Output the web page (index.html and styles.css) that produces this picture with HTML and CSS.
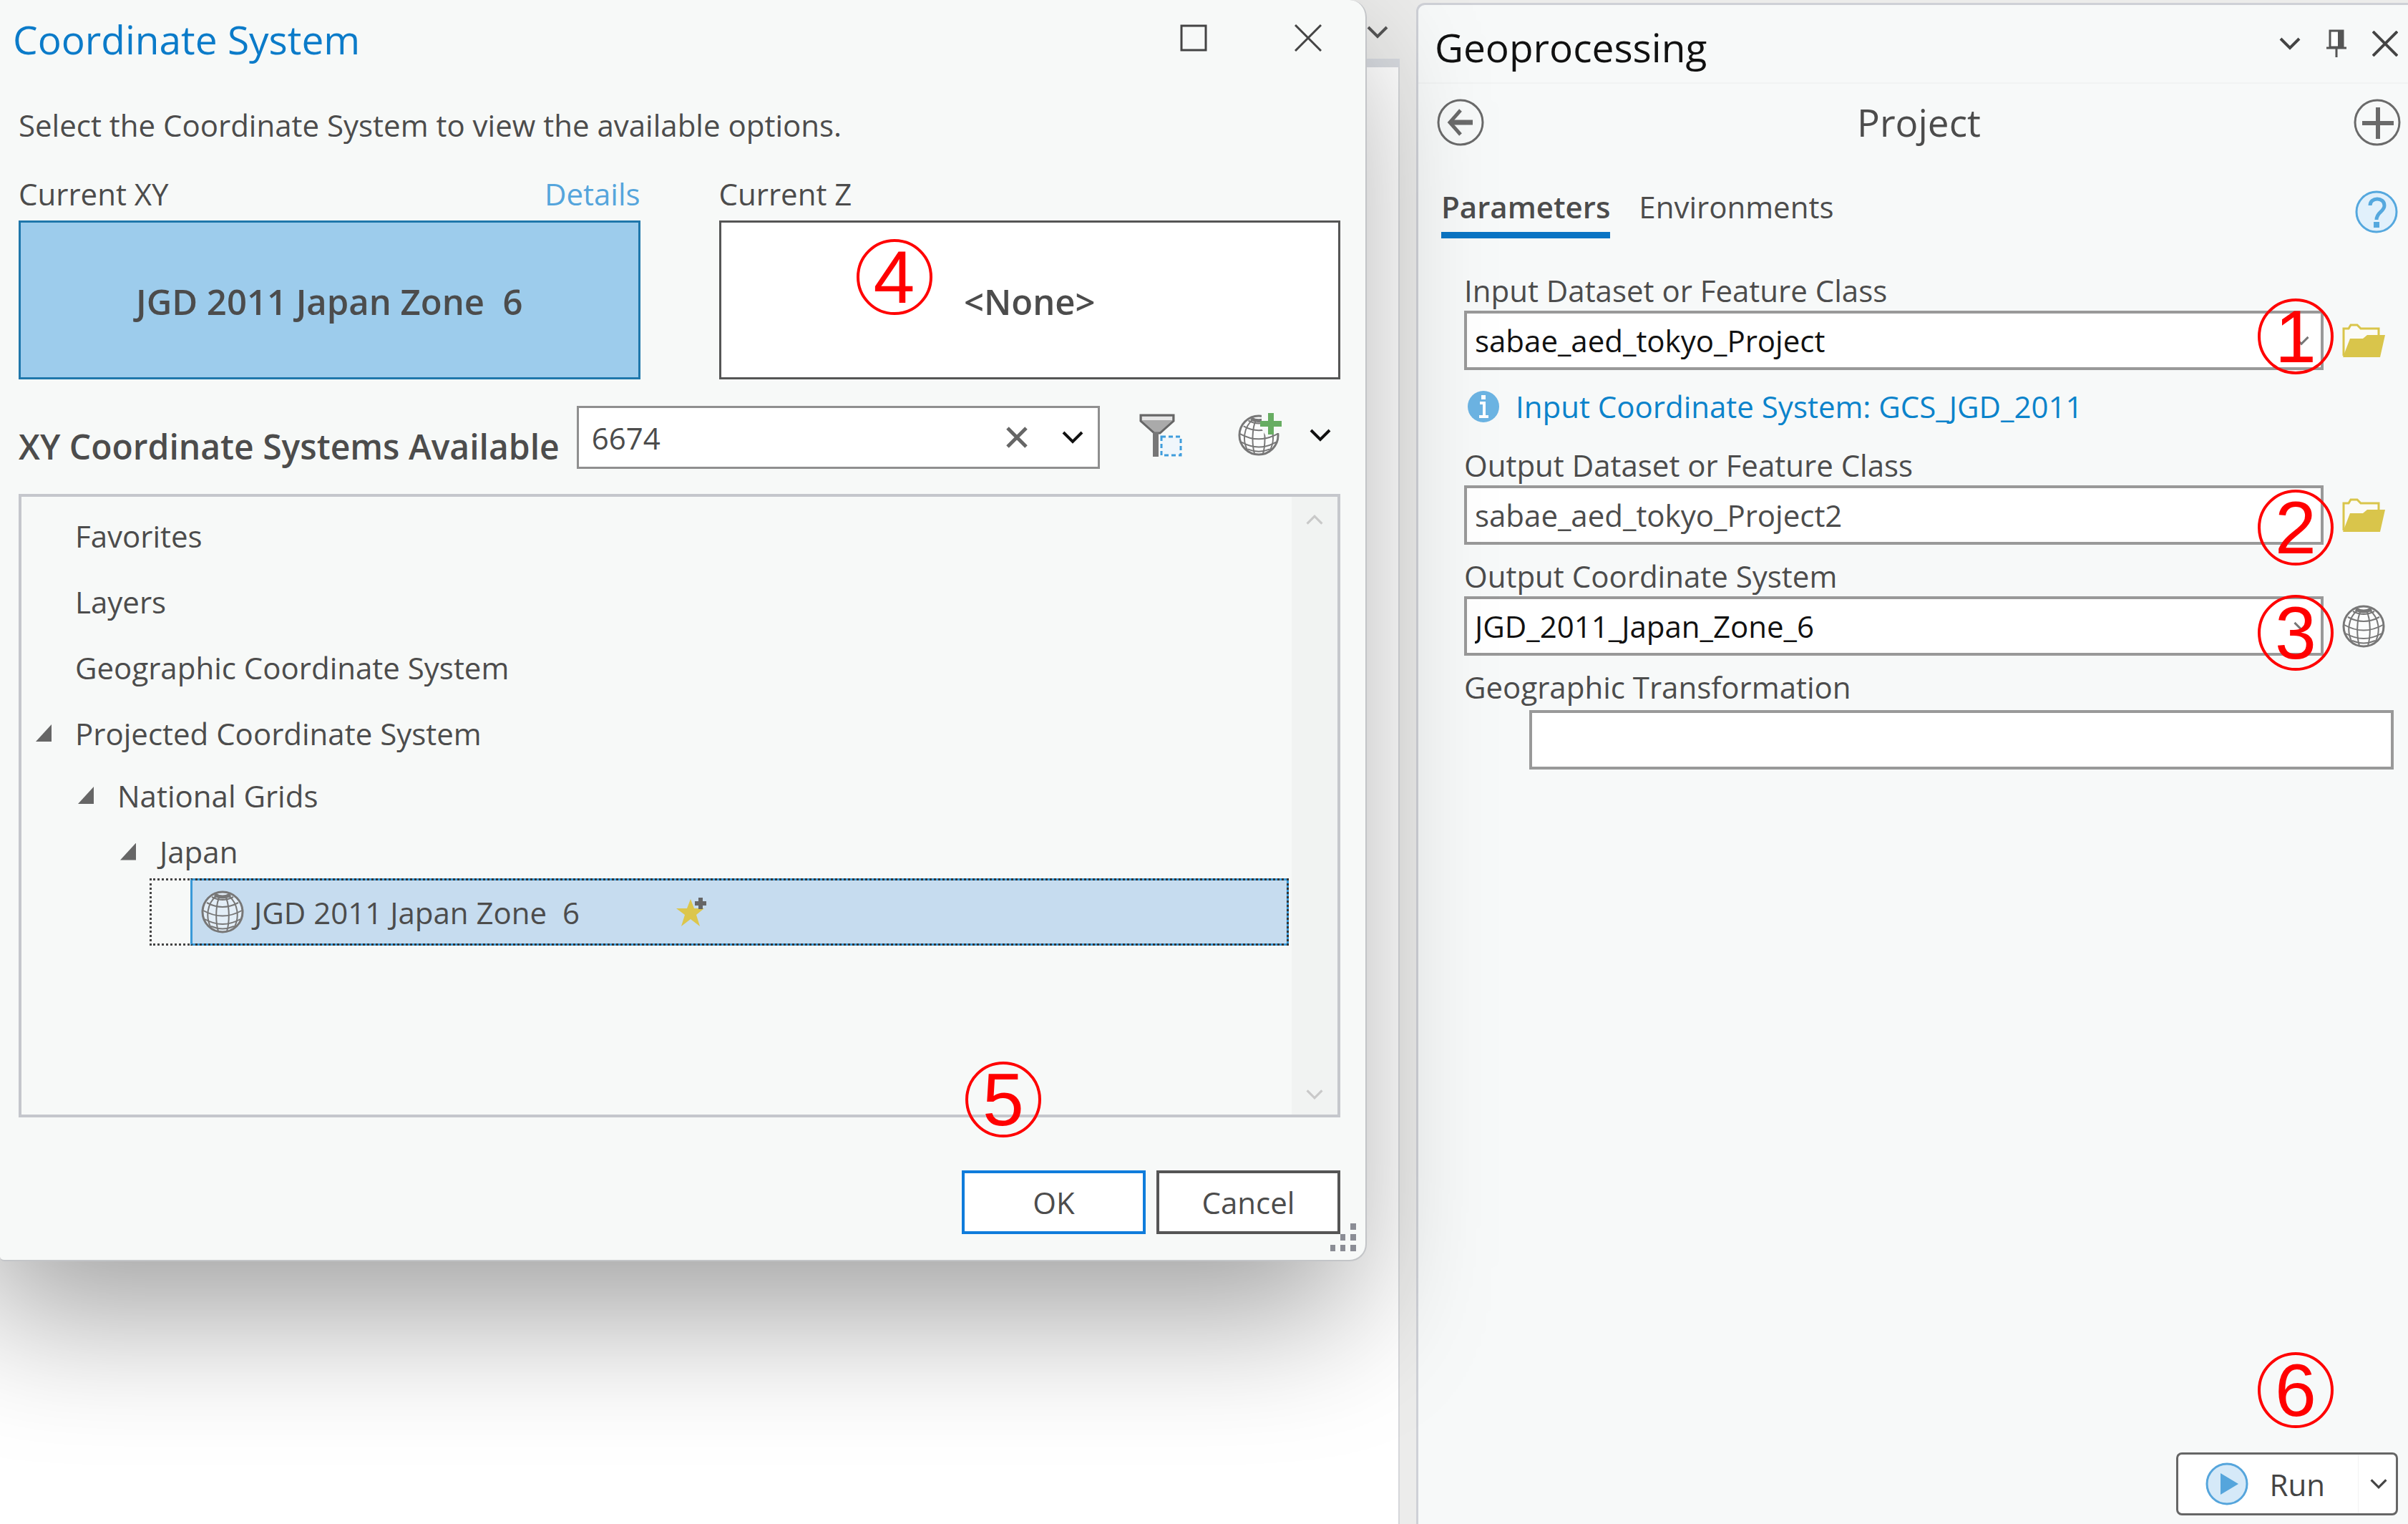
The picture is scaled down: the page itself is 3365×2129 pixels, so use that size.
FILE: index.html
```html
<!DOCTYPE html>
<html lang="en">
<head>
<meta charset="utf-8">
<title>Geoprocessing - Project</title>
<link rel="stylesheet" href="styles.css">
</head>
<body>
<svg class="defs" aria-hidden="true">
  <symbol id="chevron" viewBox="0 0 30 18"><path d="M2 2L15 15L28 2" fill="none" stroke="currentColor" stroke-width="4"/></symbol>
  <symbol id="cross" viewBox="0 0 38 38"><path d="M1 1L37 37M37 1L1 37" fill="none" stroke="currentColor" stroke-width="3"/></symbol>
  <symbol id="globe" viewBox="0 0 60 60">
    <g fill="none" stroke="#777" stroke-width="2">
      <circle cx="30" cy="30" r="28" fill="#fff" fill-opacity=".5" stroke-width="3"/>
      <path d="M26 8C20 20 20 44 24 57M34 8C40 20 40 44 36 57M22 7C8 18 6 38 14 52M38 7C52 18 54 38 46 52"/>
      <path d="M15 9Q30 17 45 9M8 17Q30 29 52 17M3 28Q30 43 57 28M5 40Q30 54 55 40M14 50Q30 57 46 50"/>
      <path d="M19 6Q30 12 41 6" stroke-width="5"/>
    </g>
  </symbol>
  <symbol id="folder" viewBox="0 0 60 48">
    <path d="M2 45V7H9L12 2H21L26 7H51V17" fill="#fbfbf7" stroke="#d9c54b" stroke-width="3"/>
    <path d="M1 47L11 21H29L35 16H60L53 47Z" fill="#d9c54b"/>
  </symbol>
</svg>

<div class="app">
  <main class="workspace">
    <div class="tabstrip"><svg class="chev"><use href="#chevron"/></svg></div>
    <div class="canvas"></div>
  </main>

  <aside class="pane">
    <header class="pane-head">
      <h1>Geoprocessing</h1>
      <div class="pane-tools">
        <button class="icon-btn" aria-label="Pane menu"><svg class="chev"><use href="#chevron"/></svg></button>
        <button class="icon-btn" aria-label="Pin"><svg width="28" height="40" viewBox="0 0 28 40"><path d="M5 2H23V25H5Z" fill="#fff" stroke="#555" stroke-width="3"/><path d="M16 2H24V25H16Z" fill="#555"/><path d="M0 26H28M14 26V39" stroke="#555" stroke-width="3"/></svg></button>
        <button class="icon-btn" aria-label="Close pane"><svg width="36" height="36" viewBox="0 0 36 36"><path d="M1 1L35 35M35 1L1 35" stroke="#444" stroke-width="4"/></svg></button>
      </div>
    </header>

    <div class="tool-head">
      <button class="icon-btn" aria-label="Back"><svg width="66" height="66" viewBox="0 0 66 66" fill="none"><circle cx="33" cy="33" r="31" stroke="#6a6a6a" stroke-width="3"/><path d="M50 33H19" stroke="#6a6a6a" stroke-width="7"/><path d="M33 16L18 33L33 50" stroke="#6a6a6a" stroke-width="5"/></svg></button>
      <h2>Project</h2>
      <button class="icon-btn" aria-label="Add"><svg width="66" height="66" viewBox="0 0 66 66" fill="none"><circle cx="33" cy="33" r="31" stroke="#6a6a6a" stroke-width="3"/><path d="M12 34H56M34 12V56" stroke="#6a6a6a" stroke-width="6"/></svg></button>
    </div>

    <nav class="tabs">
      <a class="tab active" href="#parameters">Parameters</a>
      <a class="tab" href="#environments">Environments</a>
      <button class="icon-btn help" aria-label="Help"><svg width="60" height="60" viewBox="0 0 60 60" fill="none"><circle cx="30" cy="30" r="28" fill="#e1f0fb" stroke="#55a8de" stroke-width="3"/><path d="M21 21C21 9 41 9 41 21C41 30 30 30 30 41" stroke="#55a8de" stroke-width="5"/><path d="M26 44H34V52H26Z" fill="#55a8de"/></svg></button>
    </nav>

    <form class="params">
      <label for="in-data">Input Dataset or Feature Class</label>
      <div class="row">
        <div class="field">
          <select id="in-data"><option>sabae_aed_tokyo_Project</option></select>
          <svg class="drop"><use href="#chevron"/></svg>
          <span class="badge b1">1</span>
        </div>
        <button type="button" class="icon-btn" aria-label="Browse input"><svg width="60" height="48"><use href="#folder"/></svg></button>
      </div>
      <p class="info">
        <svg width="46" height="46" viewBox="0 0 46 46"><circle cx="23" cy="23" r="22" fill="#6cb4e3"/><path d="M23 7V13" stroke="#fff" stroke-width="6"/><path d="M18 18H24V36M17 37H30" fill="none" stroke="#fff" stroke-width="4"/></svg>
        <a href="#gcs">Input Coordinate System: GCS_JGD_2011</a>
      </p>
      <label for="out-data">Output Dataset or Feature Class</label>
      <div class="row">
        <div class="field">
          <input id="out-data" type="text" value="sabae_aed_tokyo_Project2">
          <span class="badge b2">2</span>
        </div>
        <button type="button" class="icon-btn" aria-label="Browse output"><svg width="60" height="48"><use href="#folder"/></svg></button>
      </div>
      <label for="out-cs">Output Coordinate System</label>
      <div class="row">
        <div class="field">
          <select id="out-cs"><option>JGD_2011_Japan_Zone_6</option></select>
          <svg class="drop"><use href="#chevron"/></svg>
          <span class="badge b3">3</span>
        </div>
        <button type="button" class="icon-btn" aria-label="Select coordinate system"><svg width="60" height="60"><use href="#globe"/></svg></button>
      </div>
      <label for="geo">Geographic Transformation</label>
      <div class="field geo"><input id="geo" type="text"></div>
    </form>

    <footer class="run-bar">
      <div class="run">
        <button class="run-main"><svg width="60" height="60" viewBox="0 0 60 60"><circle cx="30" cy="30" r="28" fill="#d5e9f8" stroke="#55a5dc" stroke-width="3"/><path d="M21 15L46 30L21 45Z" fill="#55a5dc"/></svg>Run</button>
        <button class="run-more" aria-label="Run options"><svg width="24" height="16"><use href="#chevron"/></svg></button>
        <span class="badge b6">6</span>
      </div>
    </footer>
  </aside>
</div>

<div class="desktop">
  <section class="dialog" role="dialog" aria-labelledby="dlg-title">
    <header class="dlg-head">
      <h2 id="dlg-title">Coordinate System</h2>
      <div class="dlg-tools">
        <button class="icon-btn" aria-label="Maximize"><svg width="38" height="38" viewBox="0 0 38 38"><path d="M2 2H36V36H2Z" fill="none" stroke="#444" stroke-width="3"/></svg></button>
        <button class="icon-btn" aria-label="Close"><svg width="38" height="38"><use href="#cross"/></svg></button>
      </div>
    </header>
    <p class="desc">Select the Coordinate System to view the available options.</p>

    <div class="current">
      <div class="cur">
        <div class="cur-label"><span>Current XY</span><a href="#details">Details</a></div>
        <button class="cur-box selected">JGD 2011 Japan Zone  6</button>
      </div>
      <div class="cur">
        <div class="cur-label"><span>Current Z</span></div>
        <div class="cur-wrap">
          <button class="cur-box">&lt;None&gt;</button>
          <span class="badge b4">4</span>
        </div>
      </div>
    </div>

    <div class="search-row">
      <label for="search">XY Coordinate Systems Available</label>
      <div class="combo">
        <input id="search" type="text" value="6674">
        <button class="icon-btn" aria-label="Clear"><svg width="30" height="30" viewBox="0 0 30 30"><path d="M2 2L28 28M28 2L2 28" stroke="#666" stroke-width="5"/></svg></button>
        <button class="icon-btn dark" aria-label="Search history"><svg class="chev"><use href="#chevron"/></svg></button>
      </div>
      <div class="search-tools">
        <button class="icon-btn" aria-label="Spatial filter"><svg width="60" height="60" viewBox="0 0 60 60"><path d="M2 2H48V10L29 27H21L2 10Z" fill="#aaa" stroke="#666" stroke-width="3"/><path d="M4 4H46V9H4Z" fill="#e6e6e6"/><path d="M23 26V60" stroke="#777" stroke-width="8"/><path d="M31 32H58V58H31Z" fill="#f0f6fb" stroke="#3f9ddc" stroke-width="3" stroke-dasharray="6 4"/></svg></button>
        <button class="icon-btn" aria-label="Add coordinate system"><svg width="62" height="62" viewBox="0 0 62 62"><use href="#globe" y="2" width="58" height="58"/><path d="M33 0H62V28H50L40 34L33 22Z" fill="#f7f9f8"/><path d="M31 15H61M46 0V30" stroke="#67ad62" stroke-width="8"/></svg></button>
        <button class="icon-btn dark" aria-label="More"><svg class="chev"><use href="#chevron"/></svg></button>
      </div>
    </div>

    <div class="tree-box">
      <ul class="tree">
        <li class="item l0">Favorites</li>
        <li class="item l0">Layers</li>
        <li class="item l0">Geographic Coordinate System</li>
        <li class="item l0"><i class="tri"></i>Projected Coordinate System</li>
        <li class="item l1"><i class="tri"></i>National Grids</li>
        <li class="item l2"><i class="tri"></i>Japan</li>
        <li class="item pick"><div class="pick-body">
          <svg width="60" height="60"><use href="#globe"/></svg><span>JGD 2011 Japan Zone  6</span>
          <svg class="star" width="44" height="44" viewBox="0 0 44 44"><path d="M21 4L26 17H40L29 26L34 42L21 32L8 42L13 26L1 17H16Z" fill="#dcc64c"/><path d="M27 10H43M35 2V18" stroke="#666" stroke-width="6"/></svg>
        </div></li>
      </ul>
      <div class="scroll">
        <svg width="24" height="16" class="up"><use href="#chevron"/></svg>
        <svg width="24" height="16"><use href="#chevron"/></svg>
      </div>
      <span class="badge b5">5</span>
    </div>

    <footer class="dlg-foot">
      <button class="btn primary">OK</button>
      <button class="btn">Cancel</button>
    </footer>
    <svg class="grip" width="36" height="40" viewBox="0 0 36 40" fill="#8b8d95"><path d="M28 0h8v9h-8zM28 15h8v9h-8zM14 15h7v9h-7zM28 30h8v9h-8zM14 30h7v9h-7zM0 30h7v9H0z"/></svg>
  </section>
</div>
</body>
</html>
```
FILE: styles.css
```css
* { box-sizing: border-box; }
body {
  margin: 0;
  min-height: 100vh;
  position: relative;
  overflow: hidden;
  background: #ececeb;
  color: #4c4c4c;
  font-family: "Open Sans", "Noto Sans", sans-serif;
  font-size: 42px;
}
h1, h2, p, ul { margin: 0; padding: 0; font-weight: 400; }
button, input, select { font: inherit; color: inherit; margin: 0; }
a { text-decoration: none; }
svg { display: block; flex: none; }
.defs { position: absolute; width: 0; height: 0; }
.icon-btn { display: flex; padding: 0; border: 0; background: none; color: #444; }
.icon-btn.dark { color: #111; }
.chev { width: 30px; height: 18px; }

/* application behind the dialog */
.app { display: grid; grid-template-columns: 1956fr 1409fr; min-height: 100vh; }
.workspace { display: flex; flex-direction: column; }
.tabstrip {
  height: 94px;
  display: flex;
  justify-content: flex-end;
  padding: 36px 16px 0 0;
  border-bottom: 12px solid #d8dbe0;
  color: #555;
}
.canvas { flex: 1; background: #fff; border-right: 2px solid #d5d7da; }

/* geoprocessing pane */
.pane {
  display: flex;
  flex-direction: column;
  margin: 4px 0 0 23px;
  padding-bottom: 12px;
  background: #f7f9f9;
  border: 3px solid #cfd1d7;
  border-width: 3px 0 0 3px;
  border-top-left-radius: 12px;
}
.pane-head {
  display: flex;
  justify-content: space-between;
  align-items: center;
  height: 110px;
  padding: 0 14px 0 23px;
  border-bottom: 2px solid #f1f3f3;
}
.pane-head h1 { padding-top: 10px; font-size: 55px; line-height: 72px; color: #111; }
.pane-tools { display: flex; align-items: center; gap: 36px; }
.tool-head {
  display: flex;
  justify-content: space-between;
  align-items: center;
  height: 108px;
  padding: 0 10px 0 26px;
}
.tool-head h2 { font-size: 53px; line-height: 72px; }
.tabs { display: flex; align-items: center; gap: 40px; padding: 34px 14px 0 32px; }
.tab { line-height: 60px; padding-bottom: 5px; border-bottom: 9px solid transparent; color: #4c4c4c; }
.tab.active { font-weight: 600; border-color: #0b75c4; }
.help { margin-left: auto; }
.params { display: flex; flex-direction: column; padding: 48px 20px 0 64px; }
.params label { line-height: 50px; margin-bottom: 3px; }
.row { display: flex; align-items: center; gap: 26px; padding-right: 12px; margin-bottom: 19px; }
.field { position: relative; flex: 1; }
.field input, .field select {
  appearance: none;
  display: block;
  width: 100%;
  height: 83px;
  padding: 0 11px;
  border: 4px solid #999;
  border-radius: 0;
  background: #fff;
}
.field select { color: #111; }
.drop { position: absolute; right: 20px; top: 35px; width: 22px; height: 14px; color: #777; }
.info { display: flex; align-items: center; gap: 22px; margin: 2px 0 27px 4px; line-height: 60px; }
.info a { color: #0b83cb; }
.geo { margin: 4px 0 0 91px; }
.run-bar { display: flex; justify-content: flex-end; margin-top: auto; padding-right: 14px; }
.run {
  position: relative;
  display: flex;
  height: 88px;
  border: 3px solid #666;
  border-radius: 8px;
  background: #fff;
}
.run button { display: flex; align-items: center; padding: 0; border: 0; background: none; color: #444; }
.run .run-main { gap: 30px; padding: 0 46px 0 38px; }
.run .run-more { padding: 0 12px 0 16px; border-left: 1px solid #f2f2f2; }

/* numbered callouts lying over the controls */
.badge {
  position: absolute;
  width: 106px;
  height: 106px;
  border: 4px solid #f00;
  border-radius: 50%;
  color: #f00;
  font-family: "Liberation Sans", Arial, sans-serif;
  font-size: 104px;
  line-height: 98px;
  text-align: center;
  pointer-events: none;
}
.b1 { right: -14px; top: -17px; }
.b2 { right: -14px; top: 6px; }
.b3 { right: -14px; top: -2px; }
.b4 { left: 192px; top: 26px; }
.b5 { right: 414px; bottom: -32px; }
.b6 { right: 87px; top: -143px; }

/* coordinate system dialog */
.desktop {
  position: absolute;
  inset: 0;
  display: grid;
  grid-template-columns: 1910fr 1455fr;
  align-items: start;
  pointer-events: none;
}
.dialog {
  position: relative;
  pointer-events: auto;
  padding: 0 35px 36px 26px;
  background: #f7f9f8;
  border-right: 2px solid #c3c5c8;
  border-bottom: 2px solid #c3c5c8;
  border-radius: 0 24px 24px 6px;
  box-shadow: -25px 75px 190px rgba(0, 0, 0, .37);
}
.dlg-head { display: flex; justify-content: space-between; align-items: center; height: 110px; margin-left: -8px; padding-right: 26px; }
.dlg-head h2 { font-size: 55px; line-height: 72px; color: #0b7bc9; }
.dlg-tools { display: flex; gap: 122px; padding-bottom: 4px; }
.desc { margin-top: 35px; line-height: 60px; }
.current { display: grid; grid-template-columns: 1fr 1fr; gap: 110px; margin-top: 36px; }
.cur-label { display: flex; justify-content: space-between; line-height: 60px; margin-bottom: 7px; }
.cur-label a { color: #55a5dc; }
.cur-wrap { position: relative; }
.cur-box {
  display: block;
  width: 100%;
  height: 222px;
  padding: 4px 0 0;
  border: 3px solid #555;
  background: #fff;
  font-size: 49px;
  font-weight: 600;
  white-space: pre;
}
.cur-box.selected { background: #9dccec; border-color: #1f77ab; }
.search-row { display: flex; align-items: flex-end; margin-top: 37px; }
.search-row label { font-size: 48px; font-weight: 600; line-height: 62px; white-space: nowrap; }
.combo {
  display: flex;
  align-items: center;
  gap: 48px;
  flex: 1;
  height: 88px;
  margin-left: 24px;
  padding: 0 20px 0 18px;
  border: 3px solid #8f8f8f;
  background: #fff;
}
.combo input { flex: 1; min-width: 0; padding: 0; border: 0; background: none; outline: 0; }
.search-tools { display: flex; align-items: center; height: 88px; padding: 0 13px 6px 55px; }
.search-tools button:nth-child(2) { margin: 0 38px 0 78px; }
.tree-box { position: relative; display: flex; margin-top: 35px; border: 4px solid #c5c7cc; }
.tree { flex: 1; height: 863px; padding: 8px 4px 0 0; list-style: none; }
.item { display: flex; align-items: center; height: 92px; }
.tri { width: 22px; height: 24px; margin-right: 33px; background: #666; clip-path: polygon(100% 0, 100% 100%, 0 100%); }
.l0 { padding-left: 75px; }
.l0:has(.tri) { padding-left: 20px; }
.l1 { height: 82px; padding-left: 79px; }
.l2 { height: 75px; padding-left: 138px; }
.pick { height: 94px; margin-left: 179px; padding-left: 57px; border: 3px dotted #444; }
.pick-body {
  display: flex;
  align-items: center;
  flex: 1;
  height: 94px;
  margin: -3px;
  padding-left: 12px;
  gap: 14px;
  border: 3px dotted #333;
  border-left: 3px solid #3a9ad8;
  background: linear-gradient(#c6dcef, #c6dcef) padding-box, #3a9ad8 border-box;
  white-space: pre;
}
.star { margin-left: 120px; }
.scroll {
  display: flex;
  flex-direction: column;
  justify-content: space-between;
  align-items: center;
  width: 64px;
  padding: 24px 0 20px;
  background: #f1f3f2;
  color: #c9c9c9;
}
.up { transform: rotate(180deg); }
.dlg-foot { display: flex; justify-content: flex-end; gap: 15px; margin-top: 74px; }
.btn { width: 257px; height: 89px; border: 4px solid #555; background: #fff; }
.btn.primary { border-color: #0f7cdb; }
.grip { position: absolute; right: 13px; bottom: 11px; }
```
